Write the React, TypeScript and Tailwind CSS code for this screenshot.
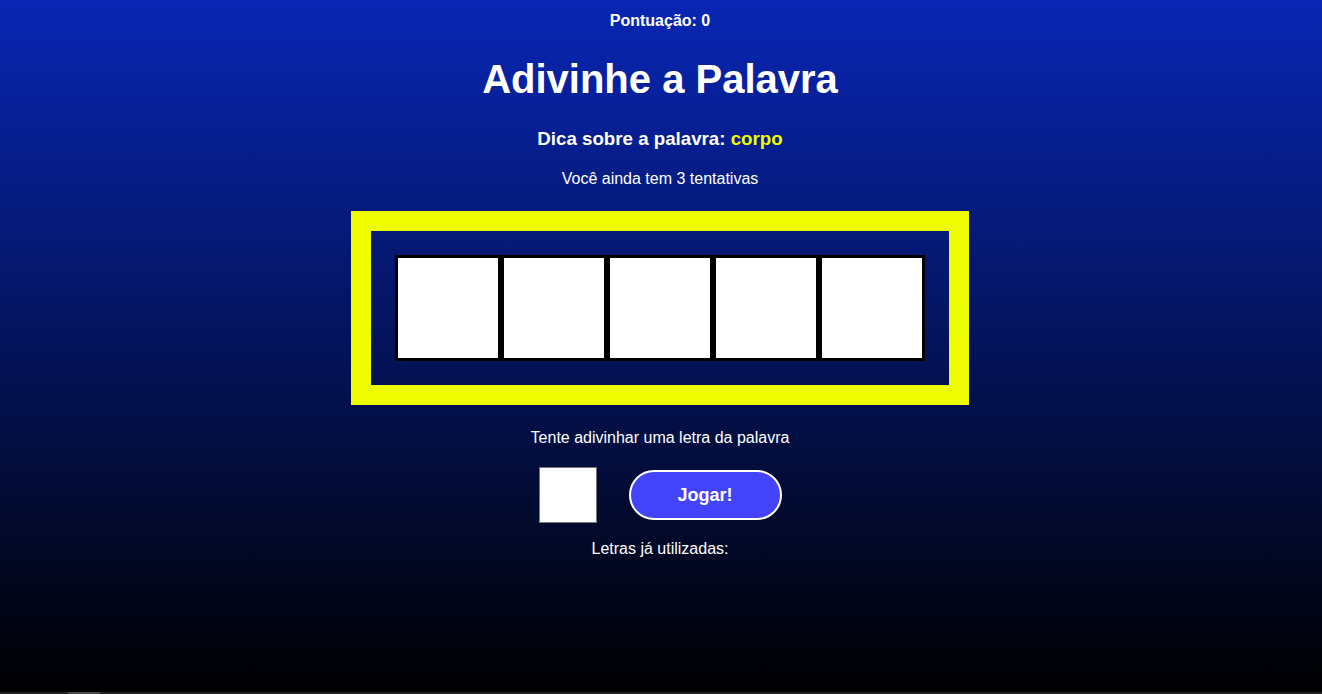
import React from "react";

export default function App() {
  return (
    <div
      className="relative w-full h-[694px] overflow-hidden bg-[linear-gradient(to_bottom,#0826b4,#000000)] text-white flex flex-col items-center pr-[2px]"
      style={{ fontFamily: '"Liberation Sans", Arial, sans-serif' }}
    >
      <div className="mt-[12px] text-[16px] leading-[18px] font-bold">Pontuação: 0</div>
      <h1 className="mt-[26px] text-[40px] leading-[46px] font-bold">Adivinhe a Palavra</h1>
      <h3 className="mt-[26px] text-[18.72px] leading-[22px] font-bold">
        Dica sobre a palavra: <span className="text-[#eefc00]">corpo</span>
      </h3>
      <p className="mt-[20px] text-[16px] leading-[18px]">Você ainda tem 3 tentativas</p>
      <div className="mt-[23px] w-[618px] h-[194px] border-[20px] border-[#eefc00] flex items-center justify-center">
        <div className="flex">
          {[0, 1, 2, 3, 4].map((i) => (
            <div key={i} className="w-[106px] h-[106px] bg-white border-[3px] border-black" />
          ))}
        </div>
      </div>
      <p className="mt-[24px] text-[16px] leading-[18px]">Tente adivinhar uma letra da palavra</p>
      <div className="mt-[20px] h-[56px] flex items-center gap-[32px]">
        <input
          type="text"
          maxLength={1}
          className="w-[58px] h-[56px] bg-white border border-[#767676] text-black text-center outline-none"
        />
        <button className="w-[153px] h-[50px] rounded-full bg-[#4343fb] border-2 border-white text-white text-[18px] font-bold">
          Jogar!
        </button>
      </div>
      <p className="mt-[17px] text-[16px] leading-[18px]">Letras já utilizadas:</p>
      <div className="absolute left-0 right-0 bottom-0 h-[2px] bg-[#222222]">
        <div className="ml-[68px] w-[32px] h-[2px] bg-[#4a4a4a]" />
      </div>
    </div>
  );
}
